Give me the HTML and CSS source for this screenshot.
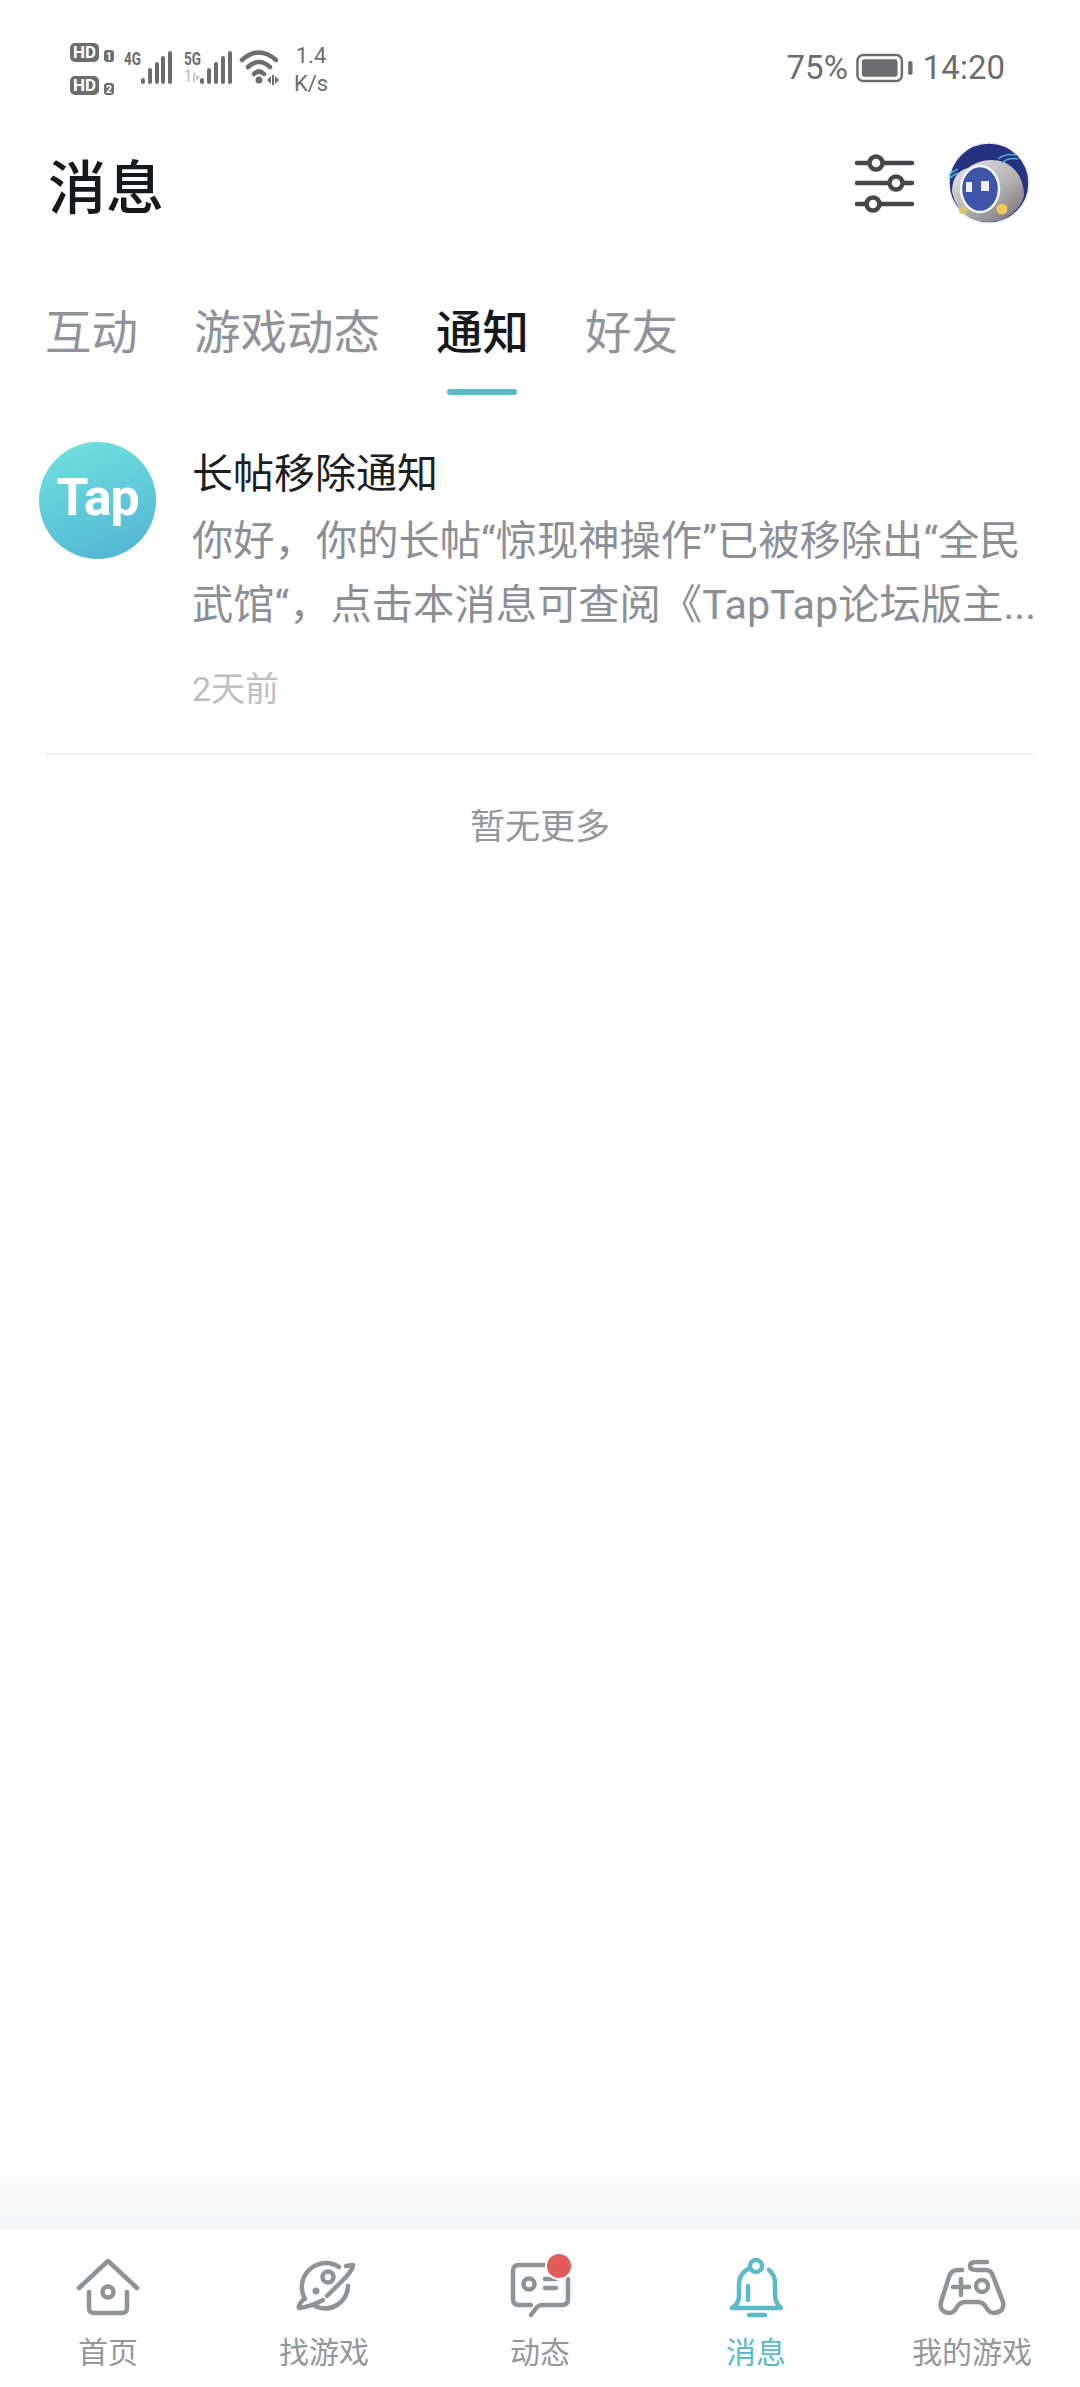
FILE: index.html
```html
<!DOCTYPE html>
<html lang="zh">
<head>
<meta charset="utf-8">
<title>消息</title>
<link rel="stylesheet" href="styles.css">
</head>
<body>
<div class="page">
  <div class="status">
    <svg class="status-left" width="300" height="60" viewBox="0 0 300 60">
      <g class="sb-fill">
        <rect x="0" y="0" width="29" height="19" rx="5"/>
        <rect x="34" y="7" width="10" height="12" rx="3"/>
        <rect x="0" y="33" width="29" height="19" rx="5"/>
        <rect x="34" y="40" width="10" height="12" rx="3"/>
      </g>
      <text class="sb-hd" x="14.500" y="15" textLength="23" lengthAdjust="spacingAndGlyphs">HD</text>
      <text class="sb-hd sb-tiny" x="39" y="17">1</text>
      <text class="sb-hd" x="14.500" y="48" textLength="23" lengthAdjust="spacingAndGlyphs">HD</text>
      <text class="sb-hd sb-tiny" x="39" y="50">2</text>
      <text class="sb-net" x="54" y="22" textLength="17" lengthAdjust="spacingAndGlyphs">4G</text>
      <text class="sb-net" x="114" y="22" textLength="17" lengthAdjust="spacingAndGlyphs">5G</text>
      <text class="sb-net sb-faint" x="114" y="39" textLength="8" lengthAdjust="spacingAndGlyphs">1</text>
      <path class="sb-arrow" d="M123 30h2v9h-2zM126 31v7l4-3.500z"/>
      <g class="sb-bars">
        <path d="M73 37v2M80 27v12M87 21v18M93 15v24M100 10v29"/>
        <path d="M132 37v2M139 27v12M146 21v18M153 15v24M160 10v29"/>
      </g>
      <g class="sb-wifi">
        <path d="M172 17Q189 2 206 17"/>
        <path d="M178 24Q189 14 200 24"/>
        <path d="M184 31Q189 26 194 31"/>
      </g>
      <circle class="sb-fill" cx="189" cy="37" r="3.500"/>
      <path class="sb-fill" d="M197 37l4-4v8zM202 32h2v10h-2zM205 33l4 4-4 4z"/>
      <text class="sb-speed" x="241" y="20">1.4</text>
      <text class="sb-speed" x="241" y="48">K/s</text>
    </svg>
    <div class="status-right">
      <span>75%</span>
      <svg class="battery" width="57" height="30" viewBox="0 0 59 30">
        <rect x="1.500" y="1.500" width="46" height="27" rx="6" fill="none" stroke="#6b6d6f" stroke-width="2.500"/>
        <rect x="6" y="6" width="37" height="18" rx="2.500" fill="#6b6d6f"/>
        <rect x="54" y="8" width="4.500" height="14" rx="1.500" fill="#6b6d6f"/>
      </svg>
      <span class="clock">14:20</span>
    </div>
  </div>

  <header class="topbar">
    <h1 class="title">消息</h1>
    <div class="actions">
      <svg class="filter" width="57" height="60" viewBox="0 0 57 60">
        <path d="M1 10H56M1 30H56M1 51H56"/>
        <circle cx="20" cy="10" r="6.500"/>
        <circle cx="40" cy="30" r="6.500"/>
        <circle cx="17" cy="51" r="6.500"/>
      </svg>
      <svg class="avatar" width="82" height="82" viewBox="0 0 82 82">
        <defs>
          <linearGradient id="ball" x1="0.1" y1="0" x2="0.9" y2="1">
            <stop offset="0" stop-color="#e6e5e6"/>
            <stop offset="0.55" stop-color="#b3b0b0"/>
            <stop offset="1" stop-color="#75707a"/>
          </linearGradient>
        </defs>
        <circle cx="41" cy="41" r="40" fill="#24327f" stroke="#e6e8f8" stroke-width="1.500"/>
        <path d="M4 50Q4 30 20 26Q36 14 56 20Q76 30 76 54Q72 68 58 76Q40 84 22 76Q8 68 4 50z" fill="url(#ball)"/>
        <ellipse cx="32" cy="47" rx="19" ry="23" fill="#3e55aa" stroke="#f4f5fa" stroke-width="2.500"/>
        <rect x="18" y="40" width="6" height="10" fill="#f0f0f0"/>
        <rect x="33" y="39" width="8" height="10" fill="#f0f0f0"/>
        <circle cx="54" cy="67" r="5.500" fill="#eec95c"/>
        <circle cx="15" cy="68" r="4" fill="#dcc26a"/>
        <path d="M50 17Q58 11 68 13M54 21Q60 15 70 17M1 33Q5 29 10 27M1 37Q5 33 10 31" fill="none" stroke="#46b4dc" stroke-width="1.500"/>
      </svg>
    </div>
  </header>

  <nav class="tabs">
    <a class="tab">互动</a>
    <a class="tab">游戏动态</a>
    <a class="tab tab-active">通知</a>
    <a class="tab">好友</a>
  </nav>

  <main class="content">
    <article class="notice">
      <div class="tap-logo"><span>Tap</span></div>
      <div class="notice-body">
        <h2 class="notice-title">长帖移除通知</h2>
        <p class="notice-text">你好，你的长帖“惊现神操作”已被移除出“全民武馆“，点击本消息可查阅《TapTap论坛版主...</p>
        <time class="notice-time">2天前</time>
      </div>
    </article>
    <div class="divider"></div>
    <p class="no-more">暂无更多</p>
  </main>

  <footer class="navbar">
    <a class="nav-item">
      <svg class="nav-icon" width="60" height="60" viewBox="0 0 60 60">
        <path d="M1 33L30 6L59 33"/>
        <path d="M11 37V53Q11 58 16 58H44Q49 58 49 53V37"/>
        <circle cx="30" cy="37" r="5.500"/>
      </svg>
      <span>首页</span>
    </a>
    <a class="nav-item">
      <svg class="nav-icon" width="60" height="60" viewBox="0 0 60 60">
        <path d="M45 12A24 24 0 0 0 11 44"/>
        <path d="M21 51A23 23 0 0 0 54 31"/>
        <path d="M52 11L59 10Q59 14 52 22L33 41"/>
        <path d="M29 45Q16 52 5 53Q4 50 9 45"/>
        <circle cx="34" cy="22" r="5.500"/>
        <circle class="nav-dot" cx="22" cy="36" r="3.500"/>
      </svg>
      <span>找游戏</span>
    </a>
    <a class="nav-item">
      <span class="icon-wrap">
        <svg class="nav-icon" width="60" height="60" viewBox="0 0 60 60">
          <path d="M45 10H9Q3 10 3 16V44Q3 50 9 50H21"/>
          <path d="M21 60L27 52Q29 50 32 50H52Q58 50 58 44V24"/>
          <circle cx="19" cy="29" r="5.500"/>
          <path d="M35 24H46M35 33H46"/>
        </svg>
        <i class="badge"></i>
      </span>
      <span>动态</span>
    </a>
    <a class="nav-item nav-active">
      <svg class="nav-icon" width="60" height="60" viewBox="0 0 60 60">
        <circle cx="30" cy="11" r="6"/>
        <path d="M24 13Q13 18 13 30V42Q13 48 6 53H55Q49 48 49 40V28Q49 20 43 15"/>
        <path d="M22 31V45"/>
        <path d="M23 60H39"/>
      </svg>
      <span>消息</span>
    </a>
    <a class="nav-item">
      <svg class="nav-icon" width="64" height="60" viewBox="0 0 64 60">
        <path d="M47 7H36Q30 7 30 11Q30 15 36 15H46Q51 15 53 21L63 47Q65 57 54 58Q49 58 46 52Q43 47 38 47H25Q20 47 17 52Q14 58 9 58Q-1 57 1 47L9 22Q11 15 18 15H22"/>
        <path d="M13 32H29M21 24V40"/>
        <circle cx="42" cy="31" r="6"/>
      </svg>
      <span>我的游戏</span>
    </a>
  </footer>
</div>
</body>
</html>
```

FILE: styles.css
```css
* { box-sizing: border-box; }
html, body { margin: 0; padding: 0; background: #fff; }
body { font-family: Roboto, "Noto Sans CJK SC", sans-serif; }
h1, h2, p { margin: 0; font-weight: 400; }

.page { width: 1080px; height: 2387px; display: flex; flex-direction: column; }

.status { height: 110px; padding: 35px 75px 0 70px; display: flex; justify-content: space-between; align-items: flex-start; flex: none; }
.status-left { display: block; margin-top: 8px; overflow: visible; }
.status-right { display: flex; align-items: center; gap: 8px; margin-top: 11px; font-size: 33px; line-height: 44px; color: #6b6d6f; }
.clock { margin-left: 2px; }

.sb-fill { fill: #6b6d6f; }
.sb-hd { font: 700 17px Roboto, sans-serif; fill: #fff; text-anchor: middle; }
.sb-tiny { font-size: 11px; }
.sb-net { font: 700 18px Roboto, sans-serif; fill: #6b6d6f; }
.sb-faint { fill: #c8c9ca; }
.sb-arrow { fill: #c8c9ca; }
.sb-bars path { fill: none; stroke: #6b6d6f; stroke-width: 4; stroke-linecap: round; }
.sb-wifi path { fill: none; stroke: #6b6d6f; stroke-width: 4.500; stroke-linecap: round; }
.sb-speed { font: 400 22px Roboto, sans-serif; fill: #6b6d6f; text-anchor: middle; }

.topbar { height: 75px; padding: 0 50px 0 48px; display: flex; justify-content: space-between; align-items: center; flex: none; margin-top: 42px; }
.title { font-size: 58px; line-height: 75px; font-weight: 500; color: #16191b; }
.actions { display: flex; align-items: center; gap: 35px; margin-bottom: 14px; }
.filter { display: block; overflow: visible; }
.filter path { fill: none; stroke: #45484b; stroke-width: 4.500; stroke-linecap: round; }
.filter circle { fill: #fff; stroke: #45484b; stroke-width: 4.500; }
.avatar { display: block; overflow: visible; }

.tabs { display: flex; gap: 56px; padding: 0 0 0 45px; margin-top: 73px; height: 105px; flex: none; }
.tab { position: relative; font-size: 46.500px; line-height: 66px; height: 66px; color: #8e9499; }
.tab-active { color: #16191b; font-weight: 500; }
.tab-active::after { content: ""; position: absolute; left: 11px; top: 89px; width: 70px; height: 6px; border-radius: 3px; background: #5bbcc8; }

.content { flex: 1; display: flex; flex-direction: column; background: linear-gradient(to bottom, #fff calc(100% - 80px), #f5f6f7 100%); }
.notice { display: flex; gap: 36px; padding: 37px 47px 0 39px; }
.tap-logo { width: 117px; height: 117px; flex: none; border-radius: 50%; display: flex; align-items: center; justify-content: center; background: linear-gradient(160deg, #72e3df 0%, #4fb2d2 100%); }
.tap-logo span { font: 700 52px/1 Roboto, sans-serif; color: #fff; letter-spacing: -1px; margin-top: -6px; }
.notice-body { flex: 1; min-width: 0; display: flex; flex-direction: column; }
.notice-title { font-size: 41px; line-height: 56px; color: #1c1f21; margin-top: 4px; }
.notice-text { font-size: 41.300px; line-height: 64px; color: #8a9095; margin: 7px -10px 0 0; }
.notice-time { font-size: 34px; line-height: 46px; color: #bcc0c3; margin-top: 29px; }
.divider { height: 2px; margin: 41px 47px 0 45px; background: #efefef; }
.no-more { text-align: center; font-size: 35px; line-height: 50px; color: #93989c; margin-top: 48px; }

.navbar { height: 158px; flex: none; display: flex; background: #fff; }
.nav-item { width: 216px; display: flex; flex-direction: column; align-items: center; padding-top: 26px; font-size: 30px; line-height: 40px; color: #93989c; }
.nav-item > span:last-child { margin-top: 18px; }
.nav-icon { display: block; overflow: visible; }
.nav-icon path, .nav-icon circle { fill: none; stroke: #8e9397; stroke-width: 4.500; stroke-linecap: round; stroke-linejoin: round; }
.nav-icon .nav-dot { fill: #8e9397; stroke: none; }
.icon-wrap { position: relative; display: block; width: 60px; height: 60px; }
.badge { position: absolute; left: 35px; top: -3px; width: 28px; height: 28px; border-radius: 50%; background: #e25c5c; border: 2px solid #fff; }
.nav-active { color: #5bbcc8; }
.nav-active .nav-icon path, .nav-active .nav-icon circle { stroke: #5bbcc8; }
```
